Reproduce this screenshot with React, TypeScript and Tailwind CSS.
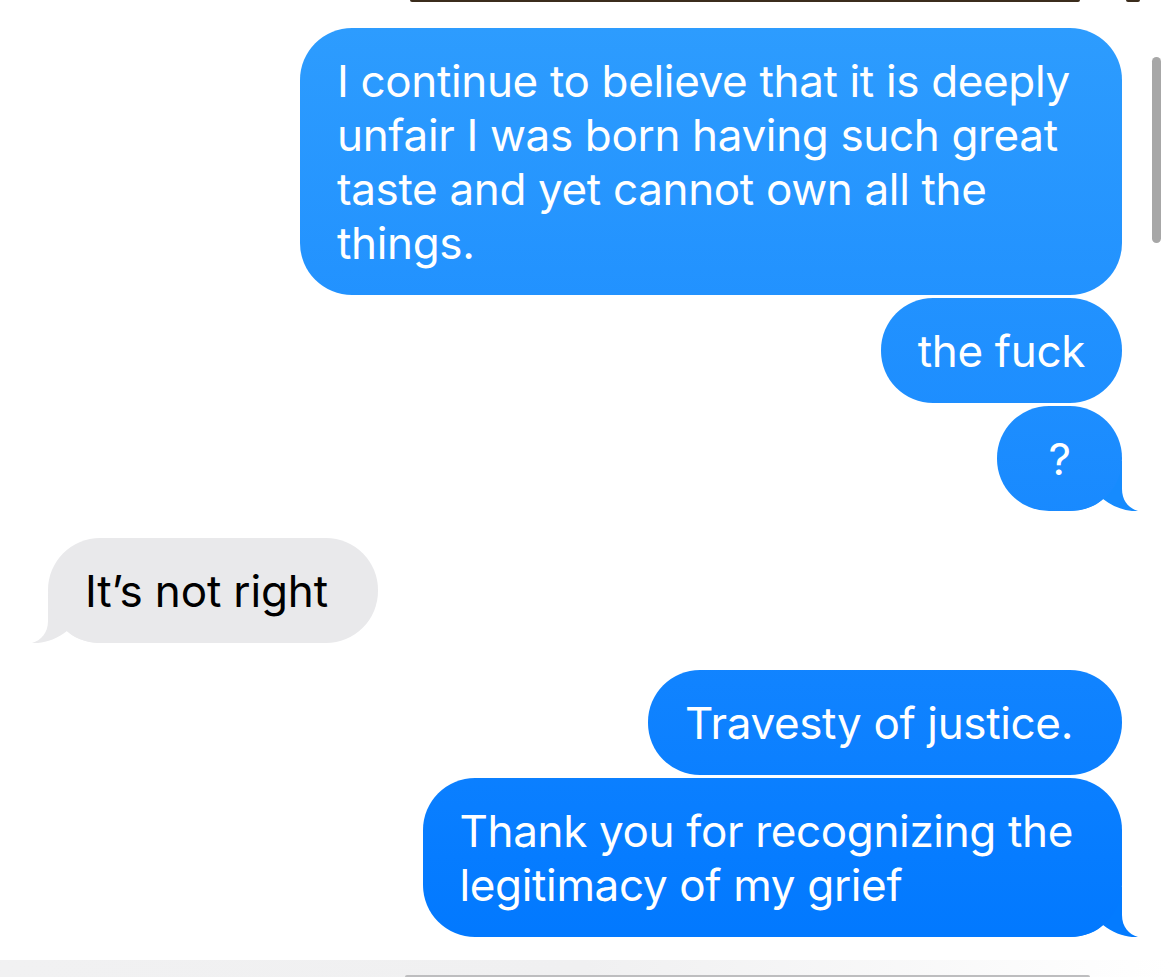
import React from 'react';

const font = { fontFamily: 'Inter, "Noto Sans", sans-serif' };

function Tail({ side, color }: { side: 'right' | 'left'; color: string }) {
  return (
    <svg
      viewBox="0 0 70 50"
      className={
        side === 'right'
          ? 'absolute bottom-0 right-[-16px] w-[70px] h-[50px]'
          : 'absolute bottom-0 left-[-16px] w-[70px] h-[50px] -scale-x-100'
      }
    >
      <path
        d="M0 50 V0 H54 V28 C54 40 61 47.5 70 50 C61 51 46 47 35 38 C29 44 18 50 0 50 Z"
        fill={color}
      />
    </svg>
  );
}

function Lines({ lines }: { lines: string[] }) {
  return (
    <>
      {lines.map((l, i) => (
        <React.Fragment key={i}>
          {i > 0 && <br />}
          {l}
        </React.Fragment>
      ))}
    </>
  );
}

function Sent({
  children,
  tail,
  tailColor,
  wide,
}: {
  children: React.ReactNode;
  tail?: boolean;
  tailColor?: string;
  wide?: boolean;
}) {
  return (
    <div className="flex justify-end">
      <div className="relative max-w-[822px]">
        <div
          className={
            'relative z-10 min-w-[125px] rounded-[52px] bg-fixed bg-linear-to-b from-[#2e9dfe] to-[#0077ff] pl-[37px] pt-[26px] pb-[25px] text-center text-[44px] leading-[54px] text-white tracking-[-0.35px] ' +
            (wide ? 'pr-[49px]' : 'pr-[37px]')
          }
        >
          <div className="text-left inline-block">{children}</div>
        </div>
        {tail && <Tail side="right" color={tailColor || '#0a7fff'} />}
      </div>
    </div>
  );
}

function Received({ children }: { children: React.ReactNode }) {
  return (
    <div className="flex justify-start">
      <div className="relative">
        <div className="relative z-10 rounded-[52px] bg-[#e9e9eb] pl-[37px] pr-[50px] pt-[26px] pb-[25px] text-[44px] leading-[54px] text-black tracking-[-0.15px]">
          {children}
        </div>
        <Tail side="left" color="#e9e9eb" />
      </div>
    </div>
  );
}

export default function App() {
  return (
    <div className="relative flex h-[977px] w-[1170px] flex-col overflow-hidden bg-white" style={font}>
      {/* cut-off image from the message above */}
      <div className="absolute top-0 left-[410px] h-[2px] w-[670px] rounded-b-full bg-[#3b2c1c]" />
      <div className="absolute top-0 left-[1126px] h-[2px] w-[14px] rounded-b-full bg-[#3b2c1c]" />

      {/* scrollbar */}
      <div className="absolute top-[57px] right-[9px] h-[186px] w-[9px] rounded-full bg-[#a7a7a7]" />

      <div className="flex flex-col px-[48px] pt-[28px]">
        <div className="flex flex-col gap-[3px]">
          <Sent>I continue to believe that it is deeply unfair I was born having such great taste and yet cannot own all the things.</Sent>
          <Sent>the fuck</Sent>
          <Sent tail tailColor="#168bfe">?</Sent>
        </div>

        <div className="mt-[27px]">
          <Received>It’s not right</Received>
        </div>

        <div className="mt-[27px] flex flex-col gap-[3px]">
          <Sent wide>Travesty of justice.</Sent>
          <Sent wide tail tailColor="#037bff">
            <Lines lines={['Thank you for recognizing the', 'legitimacy of my grief']} />
          </Sent>
        </div>
      </div>

      {/* input bar peeking in at the bottom */}
      <div className="mt-auto h-[17px] bg-linear-to-r from-[#f1f1f2] via-[#f0f0f1] to-white">
        <div className="ml-[405px] mt-[15px] h-[2px] w-[685px] rounded-t-full bg-[#bdbdbf]" />
      </div>
    </div>
  );
}
